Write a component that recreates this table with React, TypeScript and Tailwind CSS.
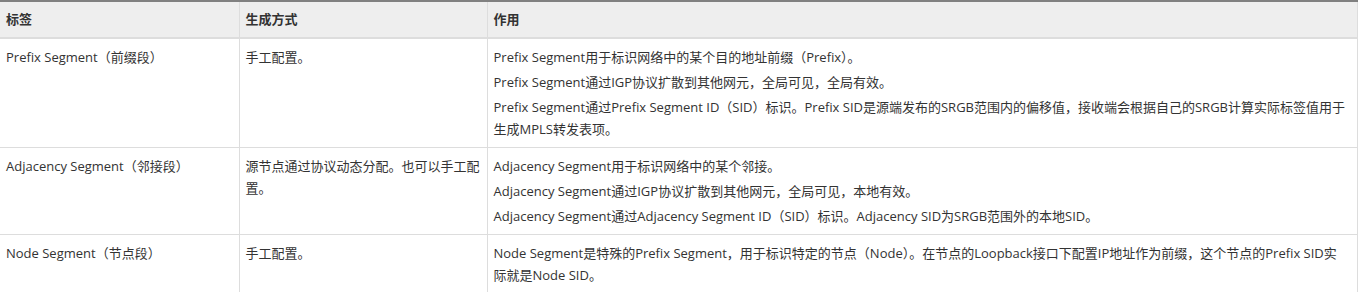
const ROWS = [
  {
    label: "Prefix Segment（前缀段）",
    mode: "手工配置。",
    uses: [
      ["Prefix Segment用于标识网络中的某个目的地址前缀（Prefix）。"],
      ["Prefix Segment通过IGP协议扩散到其他网元，全局可见，全局有效。"],
      ["Prefix Segment通过Prefix Segment ID（SID）标识。Prefix SID是源端发布的SRGB范围内的偏移值，接收端会根据自己的SRGB计算实际标签值用于生成MPLS转发表项。"],
    ],
  },
  {
    label: "Adjacency Segment（邻接段）",
    mode: "源节点通过协议动态分配。也可以手工配置。",
    uses: [
      ["Adjacency Segment用于标识网络中的某个邻接。"],
      ["Adjacency Segment通过IGP协议扩散到其他网元，全局可见，本地有效。"],
      ["Adjacency Segment通过Adjacency Segment ID（SID）标识。Adjacency SID为SRGB范围外的本地SID。"],
    ],
  },
  {
    label: "Node Segment（节点段）",
    mode: "手工配置。",
    uses: [
      [
        "Node Segment是特殊的Prefix Segment，用于标识特定的节点（Node）。在节点的Loopback接口下配置IP地址作为前缀，这个节点的Prefix SID实",
        "际就是Node SID。",
      ],
    ],
  },
];

export default function App() {
  return (
    <div className="w-[1362px] h-[292px] overflow-hidden bg-white font-['Open_Sans','Noto_Sans_CJK_SC',sans-serif] text-[13px] text-[#333]">
      <table className="w-[1358px] table-fixed border-collapse border-t-2 border-t-[#808080]">
        <colgroup>
          <col className="w-[239px]" />
          <col className="w-[248px]" />
          <col />
        </colgroup>
        <thead>
          <tr className="bg-[#eeeeee] h-[37px] border-b-2 border-b-[#dddddd]">
            <th className="text-left font-bold px-[6px] border-r border-[#dddddd]">标签</th>
            <th className="text-left font-bold px-[6px] border-r border-[#dddddd]">生成方式</th>
            <th className="text-left font-bold px-[6px] border-r border-[#dddddd]">作用</th>
          </tr>
        </thead>
        <tbody>
          {ROWS.map((row) => (
            <tr key={row.label} className="border-b border-[#dddddd] align-top">
              <td className="px-[6px] py-[7px] leading-[22px] border-r border-[#dddddd]">{row.label}</td>
              <td className="px-[6px] py-[7px] leading-[22px] border-r border-[#dddddd]">{row.mode}</td>
              <td className="px-[6px] py-[7px] leading-[22px] border-r border-[#dddddd]">
                {row.uses.map((parts, i) => (
                  <p key={i} className={i > 0 ? "mt-[3px]" : ""}>
                    {parts.map((t, j) => (
                      <span key={j}>
                        {j > 0 && <br />}
                        {t}
                      </span>
                    ))}
                  </p>
                ))}
              </td>
            </tr>
          ))}
        </tbody>
      </table>
    </div>
  );
}
